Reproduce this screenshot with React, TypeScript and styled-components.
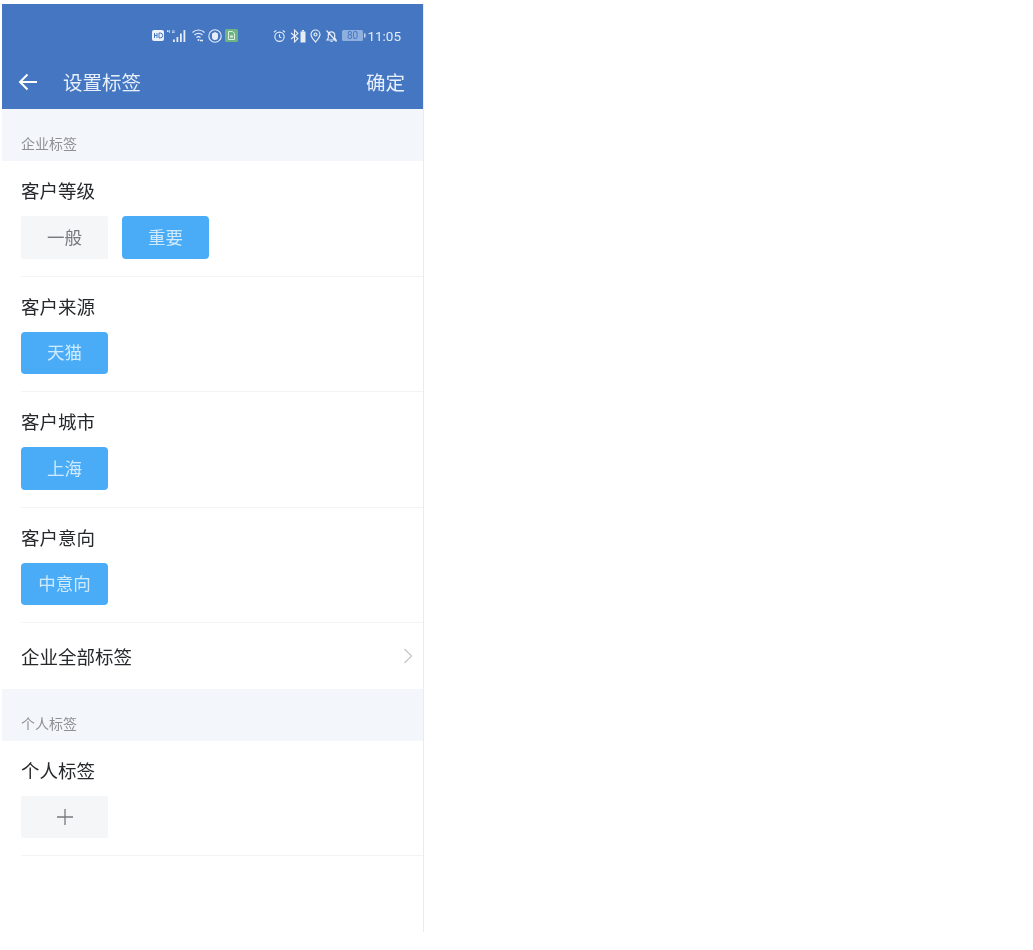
import * as React from 'react';
import styled, { createGlobalStyle } from 'styled-components';

const GlobalStyle = createGlobalStyle`
  html, body {
    margin: 0;
    padding: 0;
    background: #fff;
  }
  body {
    font-family: "Noto Sans CJK SC", "Liberation Sans", sans-serif;
  }
`

const Page = styled.div`
  width: 1033px;
  height: 950px;
  padding: 4px 0 0 2px;
  box-sizing: border-box;
  overflow: hidden;
`
const Phone = styled.div`
  width: 422px;
  height: 928px;
  box-sizing: border-box;
  display: flex;
  flex-direction: column;
  background: #fff;
  border-right: 1px solid #ebebeb;
  filter: blur(0.45px);
`
const Header = styled.header`
  height: 105px;
  flex-shrink: 0;
  box-sizing: border-box;
  display: flex;
  flex-direction: column;
  background: #4476c2;
  color: #fff;
`
const StatusBar = styled.div`
  height: 63px;
  padding: 0 22px 0 150px;
  box-sizing: border-box;
  display: flex;
  align-items: center;
  justify-content: space-between;
`
const StatusGroup = styled.div<{ $gap: number }>`
  display: flex;
  align-items: center;
  gap: ${p => p.$gap}px;
`
const Clock = styled.span`
  font-family: "Roboto", "Liberation Sans", sans-serif;
  font-size: 13.5px;
  color: #e6edf7;
  margin-left: -3px;
`
const NavBar = styled.div`
  height: 42px;
  padding: 0 18px 12px 16px;
  box-sizing: border-box;
  display: flex;
  align-items: center;
`
const NavTitle = styled.span`
  flex: 1;
  margin-left: 25px;
  font-size: 19.5px;
  line-height: 28px;
  color: #e8eff9;
`
const NavAction = styled.span`
  font-size: 19.5px;
  line-height: 28px;
  color: #e8eff9;
`
const SectionLabel = styled.div`
  height: 52px;
  flex-shrink: 0;
  padding: 0 19px 8px;
  box-sizing: border-box;
  display: flex;
  align-items: flex-end;
  background: #f3f6fa;
  font-size: 14px;
  line-height: 20px;
  color: #8e9094;
`
const Group = styled.section`
  height: 115.5px;
  flex-shrink: 0;
  margin-left: 19px;
  box-sizing: border-box;
  padding-top: 15px;
  border-bottom: 1px solid #f3f4f6;
`
const GroupTitle = styled.div`
  font-size: 18.5px;
  line-height: 28px;
  color: #26282b;
`
const ChipRow = styled.div`
  display: flex;
  gap: 14px;
  margin-top: 12px;
`
const Chip = styled.div<{ $active?: boolean }>`
  width: 87px;
  height: 42.5px;
  padding-bottom: 2px;
  box-sizing: border-box;
  display: flex;
  align-items: center;
  justify-content: center;
  border-radius: ${p => (p.$active ? '4px' : '2px')};
  background: ${p => (p.$active ? '#4aacf6' : '#f5f6f8')};
  color: ${p => (p.$active ? '#cfeafd' : '#77797c')};
  font-size: 17.5px;

  svg {
    margin-bottom: -2px;
  }
`
const LinkRow = styled.div`
  height: 65.5px;
  flex-shrink: 0;
  padding: 0 10px 0 19px;
  box-sizing: border-box;
  display: flex;
  align-items: center;
  justify-content: space-between;
  font-size: 18.5px;
  color: #26282b;
`

function HdIcon() {
  return (
    <svg width="12" height="11" viewBox="0 0 12 11">
      <rect width="12" height="11" rx="2" fill="#eef3fa" />
      <path d="M2.500 3v5M5 3v5M2.500 5.500H5M7 3v5h1.200a2.500 2.500 0 000-5z" stroke="#4476c2" strokeWidth="1" fill="none" />
    </svg>
  )
}

function SignalIcon() {
  return (
    <svg width="22" height="14" viewBox="0 0 22 14" fill="#e6edf7">
      <path d="M.5 1h1L.9 2.500H2V1h.7v3H2v-.9H0V2.500zM5.500 1H7.500v.6H5.700v1.800h1.100V2.800h-.6v-.6H7.500V4H5z" />
      <rect x="6" y="10.500" width="1.800" height="2.500" />
      <rect x="9.500" y="8" width="1.800" height="5" />
      <rect x="13" y="4.500" width="1.800" height="8.500" />
      <rect x="16.500" y="1" width="1.800" height="12" />
    </svg>
  )
}

function WifiIcon() {
  return (
    <svg width="13" height="13" viewBox="0 0 13 13" fill="none" stroke="#e6edf7" strokeWidth="1.200">
      <path d="M.5 3.500a8.500 8.500 0 0112 0M2.500 6a5.700 5.700 0 018 0M4.500 8.500a3 3 0 014 0" />
      <path d="M8 11.500h3" strokeWidth="1.600" />
      <circle cx="6.500" cy="11" r="1" fill="#e6edf7" stroke="none" />
    </svg>
  )
}

function ShieldIcon() {
  return (
    <svg width="14" height="14" viewBox="0 0 14 14">
      <circle cx="7" cy="7" r="6.200" fill="none" stroke="#e6edf7" strokeWidth="1.100" />
      <path d="M7 3l3 1.500V8a3 3 0 01-3 3 3 3 0 01-3-3V4.500z" fill="#e6edf7" />
    </svg>
  )
}

function SimIcon() {
  return (
    <svg width="13" height="13" viewBox="0 0 13 13">
      <rect width="13" height="13" rx="1.500" fill="#6cb582" />
      <path d="M3.500 2.500h4l2 2v6h-6z" fill="none" stroke="#dcefe0" strokeWidth="1" />
      <rect x="5" y="6.500" width="3" height="2" fill="#dcefe0" />
    </svg>
  )
}

function AlarmIcon() {
  return (
    <svg width="13" height="14" viewBox="0 0 14 14" fill="none" stroke="#e6edf7" strokeWidth="1.200">
      <circle cx="7" cy="7.800" r="5" />
      <path d="M7 5v3l2 1M1 3l2.500-2M13 3l-2.500-2" />
    </svg>
  )
}

function BluetoothBatteryIcon() {
  return (
    <svg width="16" height="14" viewBox="0 0 16 14" fill="none" stroke="#e6edf7" strokeWidth="1.100">
      <path d="M1 4l7 5.500L4.500 13V1L8 4.500 1 10" />
      <rect x="10.500" y="2.500" width="5" height="11" fill="#e6edf7" stroke="none" />
      <rect x="12" y="1" width="2" height="1.500" fill="#e6edf7" stroke="none" />
    </svg>
  )
}

function PinIcon() {
  return (
    <svg width="11" height="14" viewBox="0 0 11 14" fill="none" stroke="#e6edf7" strokeWidth="1.200">
      <path d="M5.500 13C3 10 1 8 1 5.500a4.500 4.500 0 019 0C10 8 8 10 5.500 13z" />
      <circle cx="5.500" cy="5.500" r="1.500" />
    </svg>
  )
}

function MuteIcon() {
  return (
    <svg width="13" height="14" viewBox="0 0 13 14" fill="none" stroke="#e6edf7" strokeWidth="1.200">
      <path d="M2 11h9l-1.300-2V6a3.200 3.200 0 00-6.400 0v3zM5.500 12.500h2M1.500 1.500l10 11" />
    </svg>
  )
}

function BatteryIcon() {
  return (
    <svg width="24" height="11" viewBox="0 0 24 11">
      <rect width="21" height="11" rx="1.500" fill="#8fb0df" />
      <rect x="22" y="3.500" width="1.500" height="4" fill="#c4d5ee" />
      <text x="10.500" y="9" textAnchor="middle" fontSize="10" fontFamily="Roboto, sans-serif" fill="#4476c2">80</text>
    </svg>
  )
}

function BackArrow() {
  return (
    <svg width="20" height="18" viewBox="0 0 20 18" fill="none" stroke="#fff" strokeWidth="2">
      <path d="M19 9H2M9.500 1.500L2 9l7.500 7.500" />
    </svg>
  )
}

function Chevron() {
  return (
    <svg width="10" height="16" viewBox="0 0 10 16" fill="none" stroke="#c3c5c8" strokeWidth="1.200">
      <path d="M1.500 1l7 7-7 7" />
    </svg>
  )
}

function PlusIcon() {
  return (
    <svg width="16" height="16" viewBox="0 0 16 16" stroke="#77797c" strokeWidth="1.300">
      <path d="M0 8h16M8 0v16" />
    </svg>
  )
}

const groups = [
  { title: '客户等级', chips: [{ label: '一般' }, { label: '重要', active: true }] },
  { title: '客户来源', chips: [{ label: '天猫', active: true }] },
  { title: '客户城市', chips: [{ label: '上海', active: true }] },
  { title: '客户意向', chips: [{ label: '中意向', active: true }] },
]

export default function App() {
  return (
    <Page>
      <GlobalStyle />
      <Phone>
        <Header>
          <StatusBar>
            <StatusGroup $gap={3}>
              <HdIcon />
              <SignalIcon />
              <WifiIcon />
              <ShieldIcon />
              <SimIcon />
            </StatusGroup>
            <StatusGroup $gap={4}>
              <AlarmIcon />
              <BluetoothBatteryIcon />
              <PinIcon />
              <MuteIcon />
              <BatteryIcon />
              <Clock>11:05</Clock>
            </StatusGroup>
          </StatusBar>
          <NavBar>
            <BackArrow />
            <NavTitle>设置标签</NavTitle>
            <NavAction>确定</NavAction>
          </NavBar>
        </Header>
        <SectionLabel>企业标签</SectionLabel>
        {groups.map(group => (
          <Group key={group.title}>
            <GroupTitle>{group.title}</GroupTitle>
            <ChipRow>
              {group.chips.map(chip => (
                <Chip key={chip.label} $active={chip.active}>{chip.label}</Chip>
              ))}
            </ChipRow>
          </Group>
        ))}
        <LinkRow>
          企业全部标签
          <Chevron />
        </LinkRow>
        <SectionLabel>个人标签</SectionLabel>
        <Group>
          <GroupTitle>个人标签</GroupTitle>
          <ChipRow>
            <Chip><PlusIcon /></Chip>
          </ChipRow>
        </Group>
      </Phone>
    </Page>
  )
}
